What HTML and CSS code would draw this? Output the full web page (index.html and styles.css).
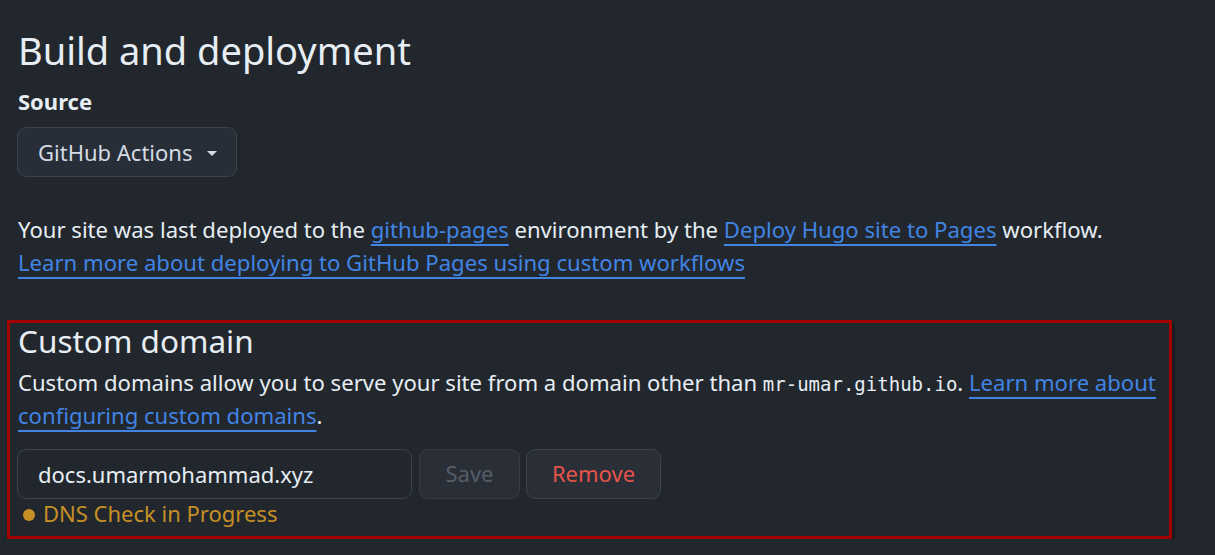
FILE: index.html
```html
<!DOCTYPE html>
<html lang="en">
<head>
<meta charset="utf-8">
<title>Pages settings</title>
<link rel="stylesheet" href="styles.css">
</head>
<body>
<main class="page">
  <section class="block">
    <h2 class="title">Build and deployment</h2>
    <div class="label">Source</div>
    <button class="select" type="button"><span>GitHub Actions</span><span class="caret"></span></button>
    <p class="desc">Your site was last deployed to the <a href="#">github-pages</a> environment by the <a href="#">Deploy Hugo site to Pages</a> workflow.<br><a href="#">Learn more about deploying to GitHub Pages using custom workflows</a></p>
  </section>
  <section class="domain">
    <h3 class="subtitle">Custom domain</h3>
    <p class="desc2">Custom domains allow you to serve your site from a domain other than <code>mr-umar.github.io</code>. <a href="#">Learn more about configuring custom domains</a>.</p>
    <div class="row">
      <div class="input">docs.umarmohammad.xyz</div>
      <button class="btn btn-save" type="button">Save</button>
      <button class="btn btn-remove" type="button">Remove</button>
    </div>
    <div class="status"><span class="dot"></span>DNS Check in Progress</div>
  </section>
</main>
</body>
</html>
```
FILE: styles.css
```css
html, body {
  margin: 0;
  padding: 0;
  background: #22272e;
}
body {
  font-family: "Noto Sans", "Open Sans", sans-serif;
  color: #e6edf3;
  font-size: 22px;
}
.page {
  width: 1165px;
  margin-left: 7px;
  padding-top: 24px;
}
.block {
  padding-left: 11px;
}
.title {
  margin: 0;
  font-size: 38px;
  font-weight: 400;
  line-height: 52px;
  color: #e6edf3;
}
.label {
  font-weight: 700;
  font-size: 22px;
  line-height: 33px;
  margin-top: 9px;
}
.select {
  box-sizing: border-box;
  margin: 9px 0 0 -1px;
  display: flex;
  align-items: center;
  justify-content: space-between;
  width: 220px;
  height: 50px;
  padding: 0 19px 0 20px;
  border: 1px solid #3b424c;
  border-radius: 9px;
  background: #282e37;
  color: #d3dbe4;
  font-family: inherit;
  font-size: 22px;
}
.caret {
  width: 0;
  height: 0;
  border-left: 5px solid transparent;
  border-right: 5px solid transparent;
  border-top: 5px solid #d3dbe4;
  margin-top: 2px;
}
.desc {
  margin: 36px 0 0;
  font-size: 22.12px;
  line-height: 33px;
  color: #e6edf3;
}
a {
  color: #4184e4;
  text-decoration: underline;
  text-underline-offset: 6px;
  text-decoration-thickness: 2px;
}
.domain {
  margin-top: 41px;
  border: 3px solid #a30000;
  padding: 0 8px 8px;
  box-shadow: 2px 2px 3px rgba(0, 0, 0, 0.45);
}
.subtitle {
  margin: 0;
  font-size: 31.5px;
  font-weight: 400;
  line-height: 36px;
  color: #e6edf3;
}
.desc2 {
  margin: 7px 0 0;
  font-size: 22.1px;
  line-height: 33px;
}
code {
  font-family: "DejaVu Sans Mono", monospace;
  font-size: 19px;
  line-height: 1;
}
.row {
  display: flex;
  gap: 7px;
  margin-top: 17px;
}
.input {
  box-sizing: border-box;
  width: 395px;
  height: 50px;
  border: 1px solid #3b424c;
  border-radius: 9px;
  background: #22272e;
  padding: 0 20px;
  display: flex;
  align-items: center;
  color: #e6edf3;
  margin-left: -1px;
}
.btn {
  box-sizing: border-box;
  height: 50px;
  border: 1px solid #363c45;
  border-radius: 9px;
  background: #2a2f37;
  font-family: inherit;
  font-size: 22px;
  padding: 0 0 3px;
}
.btn-save {
  width: 101px;
  color: #545d68;
}
.btn-remove {
  width: 135px;
  margin-left: -1px;
  color: #e5534b;
  border-color: #3b424c;
}
.status {
  display: flex;
  align-items: center;
  gap: 8px;
  color: #c69026;
  line-height: 29px;
  padding-left: 5px;
}
.dot {
  width: 12px;
  height: 12px;
  border-radius: 50%;
  background: #c69026;
  margin-top: 3px;
}
```
